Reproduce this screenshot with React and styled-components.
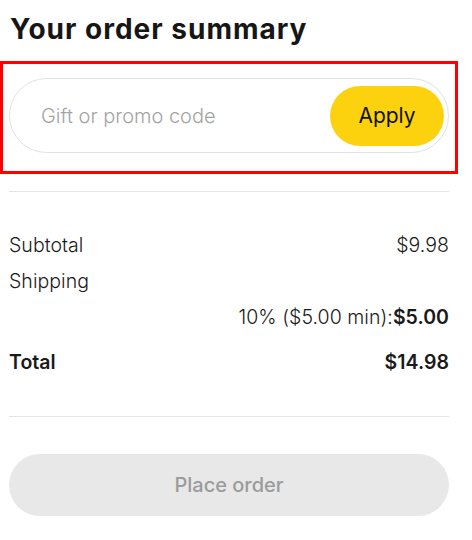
import React from "react"
import styled, { createGlobalStyle } from "styled-components"

const GlobalStyle = createGlobalStyle`
  body {
    margin: 0;
    background: #fff;
    font-family: Inter, "Noto Sans", sans-serif;
    color: #1a1a1a;
  }
`

const Summary = styled.section`
  width: 440px;
  padding: 11px 0 0 9px;
`
const Title = styled.h1`
  margin: 0;
  padding-left: 1px;
  font-size: 28px;
  line-height: 36px;
  font-weight: 700;
  letter-spacing: 1px;
  color: #161616;
`
const Highlight = styled.div`
  margin: 14px 0 0 -9px;
  width: 440px;
  padding: 14px 6px 18px;
  border: 3px solid #ff0000;
`
const PromoField = styled.form`
  display: flex;
  align-items: center;
  justify-content: space-between;
  width: 440px;
  height: 75px;
  box-sizing: border-box;
  padding: 0 4px 0 29px;
  border: 1px solid #e2e2e2;
  border-radius: 999px;
`
const PromoInput = styled.input`
  flex: 1;
  min-width: 0;
  border: 0;
  outline: none;
  background: transparent;
  font: 300 20px Inter, "Noto Sans", sans-serif;
  color: #222;
  &::placeholder {
    color: #a3a3a3;
  }
`
const ApplyButton = styled.button`
  flex: none;
  width: 114px;
  height: 60px;
  border: 0;
  border-radius: 999px;
  background: #fcd20f;
  font: 400 21px Inter, "Noto Sans", sans-serif;
  color: #111;
`
const Divider = styled.hr`
  margin: ${(p) => p.$top}px 0 0;
  border: 0;
  border-top: 1px solid #e4e4e4;
`
const Lines = styled.div`
  margin-top: 35px;
`
const Line = styled.div`
  display: flex;
  justify-content: ${(p) => (p.$end ? "flex-end" : "space-between")};
  margin-top: ${(p) => p.$top || 0}px;
  font-size: 19.5px;
  line-height: 36px;
  letter-spacing: 0.05px;
  font-weight: ${(p) => (p.$bold ? 600 : 300)};
  color: #1a1a1a;
`
const Strong = styled.span`
  font-weight: 600;
`
const PlaceOrder = styled.button`
  display: block;
  width: 440px;
  height: 62px;
  margin-top: 37px;
  border: 0;
  border-radius: 999px;
  background: #e8e8e8;
  font: 500 20px Inter, "Noto Sans", sans-serif;
  color: #9b9b9b;
`

const App = () => (
  <>
    <GlobalStyle />
    <Summary>
      <Title>Your order summary</Title>
      <Highlight>
        <PromoField onSubmit={(e) => e.preventDefault()}>
          <PromoInput placeholder="Gift or promo code" />
          <ApplyButton type="submit">Apply</ApplyButton>
        </PromoField>
      </Highlight>
      <Divider $top={17} />
      <Lines>
        <Line>
          <span>Subtotal</span>
          <span>$9.98</span>
        </Line>
        <Line>
          <span>Shipping</span>
        </Line>
        <Line $end>
          <span>
            10% ($5.00 min):<Strong>$5.00</Strong>
          </span>
        </Line>
        <Line $bold $top={9}>
          <span>Total</span>
          <span>$14.98</span>
        </Line>
      </Lines>
      <Divider $top={36} />
      <PlaceOrder disabled>Place order</PlaceOrder>
    </Summary>
  </>
)

export default App
